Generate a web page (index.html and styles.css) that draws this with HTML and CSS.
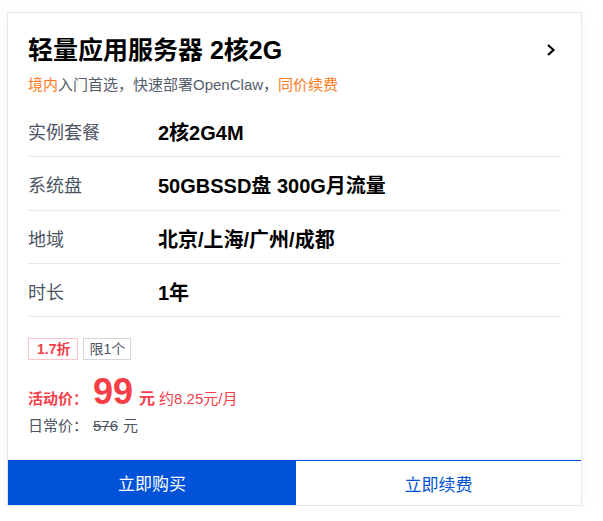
FILE: index.html
```html
<!DOCTYPE html>
<html lang="zh-CN">
<head>
    <meta charset="UTF-8">
    <title>轻量应用服务器</title>
    <link rel="stylesheet" href="styles.css">
</head>
<body>
<div class="card">
    <div class="card-body">
        <div class="head">
            <h2 class="title">轻量应用服务器 2核2G</h2>
            <svg class="arrow" width="12" height="14" viewBox="0 0 12 14">
                <path d="M3 2 L8.5 7 L3 12" fill="none" stroke="#000" stroke-width="2.2"/>
            </svg>
        </div>
        <p class="sub"><span class="hl">境内</span>入门首选，快速部署OpenClaw，<span class="hl">同价续费</span></p>

        <ul class="spec">
            <li><span class="lab">实例套餐</span><span class="val">2核2G4M</span></li>
            <li><span class="lab">系统盘</span><span class="val">50GBSSD盘 300G月流量</span></li>
            <li><span class="lab">地域</span><span class="val">北京/上海/广州/成都</span></li>
            <li><span class="lab">时长</span><span class="val">1年</span></li>
        </ul>

        <div class="tags">
            <span class="tag tag-red">1.7折</span>
            <span class="tag">限1个</span>
        </div>

        <div class="price">
            <span class="p-lab">活动价：</span>
            <span class="p-num">99</span>
            <span class="p-unit">元</span>
            <span class="p-month">约8.25元/月</span>
        </div>
        <div class="old">
            <span class="o-lab">日常价：</span>
            <span class="o-num">576</span>
            <span class="o-unit">元</span>
        </div>
    </div>
    <div class="btns">
        <a href="#" class="btn btn-buy">立即购买</a>
        <a href="#" class="btn btn-renew">立即续费</a>
    </div>
</div>
</body>
</html>
```

FILE: styles.css
```css
* {
    margin: 0;
    padding: 0;
    box-sizing: border-box;
}

body {
    background: #fff;
    padding: 12px 0 0 7px;
    font-family: "Liberation Sans", "Noto Sans CJK SC", sans-serif;
}

.card {
    width: 575px;
    border: 1px solid #e5e8ef;
    box-shadow: 0 2px 14px rgba(120, 140, 180, 0.08);
    background: #fff;
}

.card-body {
    padding: 21px 20px 24px 20px;
}

.head {
    display: flex;
    align-items: center;
    justify-content: space-between;
    height: 32px;
}

.title {
    font-size: 25px;
    font-weight: bold;
    color: #000;
    line-height: 32px;
}

.arrow {
    margin-right: 4px;
}

.sub {
    margin-top: 9px;
    font-size: 15px;
    line-height: 20px;
    color: #555d6b;
}

.hl {
    color: #ff7a1a;
}

.spec {
    list-style: none;
    margin-top: 9px;
}

.spec li {
    display: flex;
    align-items: center;
    padding: 18px 0 11px 0;
    line-height: 23.33px;
    border-bottom: 1px solid #e8eaee;
}

.lab {
    width: 130px;
    font-size: 18px;
    color: #4d5564;
}

.val {
    font-size: 20px;
    font-weight: bold;
    color: #000;
}

.tags {
    display: flex;
    gap: 5px;
    margin-top: 21px;
}

.tag {
    height: 22px;
    line-height: 20px;
    padding: 0 5px;
    border: 1px solid #d3d6de;
    font-size: 14px;
    color: #4d5564;
}

.tag-red {
    padding: 0 7px 0 8px;
    border-color: #ffc4c8;
    color: #f5414b;
    font-weight: bold;
}

.price {
    display: flex;
    align-items: baseline;
    margin-top: 11px;
    height: 40px;
    color: #f5414b;
}

.p-lab {
    font-size: 15px;
    font-weight: bold;
    width: 65px;
}

.p-num {
    font-size: 36px;
    font-weight: bold;
    color: #f73e46;
}

.p-unit {
    font-size: 16px;
    font-weight: bold;
    margin-left: 6px;
}

.p-month {
    font-size: 15px;
    margin-left: 4px;
}

.old {
    display: flex;
    margin-top: 5px;
    font-size: 15px;
    line-height: 20px;
    color: #4d5564;
}

.o-lab {
    width: 65px;
}

.o-num {
    text-decoration: line-through;
}

.o-unit {
    margin-left: 5px;
}

.btns {
    display: flex;
    height: 45px;
}

.btn {
    display: flex;
    align-items: center;
    justify-content: center;
    font-size: 17px;
    text-decoration: none;
}

.btn-buy {
    width: 288px;
    background: #0052d9;
    color: #fff;
}

.btn-renew {
    flex: 1;
    border-top: 1px solid #0052d9;
    color: #0052d9;
    background: #fff;
}
```
